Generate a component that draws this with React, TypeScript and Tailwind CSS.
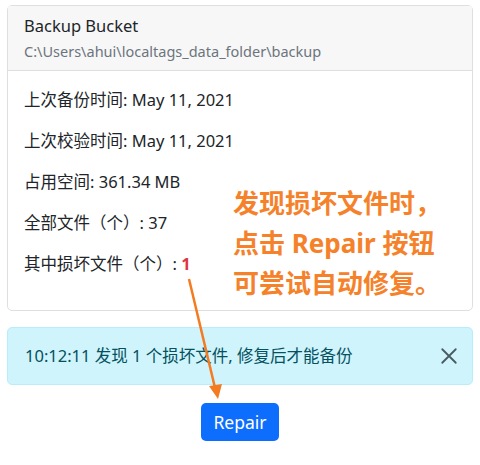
const font = { fontFamily: '"Noto Sans", "Noto Sans CJK SC", sans-serif' };

const rows: { label: string; value: string; danger?: boolean }[] = [
  { label: "上次备份时间: ", value: "May 11, 2021" },
  { label: "上次校验时间: ", value: "May 11, 2021" },
  { label: "占用空间: ", value: "361.34 MB" },
  { label: "全部文件（个）: ", value: "37" },
  { label: "其中损坏文件（个）: ", value: "1", danger: true },
];

export default function App() {
  return (
    <div className="relative h-[465px] w-[480px] bg-white px-[7px] pt-[5px] text-[#212529]" style={font}>
      <div className="rounded-[5px] border border-[#dfdfdf]">
        <div className="border-b border-[#dfdfdf] bg-[#f7f7f7] px-4 py-[7px]">
          <div className="text-[16.5px] leading-[26px]">Backup Bucket</div>
          <div className="text-[14.5px] leading-[24px] text-[#6c757d]">C:\Users\ahui\localtags_data_folder\backup</div>
        </div>
        <div className="px-4 pt-4 pb-[18px]">
          {rows.map((r) => (
            <p key={r.label} className="mb-[15px] text-[16.5px] leading-[26px]">
              {r.label}
              <span className={r.danger ? "font-bold text-[#dc3545]" : ""}>{r.value}</span>
            </p>
          ))}
        </div>
      </div>

      <div className="mt-4 flex items-center justify-between rounded-[5px] border border-[#b6effb] bg-[#cff4fc] py-4 pl-[17px] pr-[14px] text-[#055160]">
        <span className="text-[16.5px] leading-[24px]">10:12:11 发现 1 个损坏文件, 修复后才能备份</span>
        <svg width="18" height="18" viewBox="0 0 16 16" className="text-[#4a5a60]">
          <path d="M2 2L14 14M14 2L2 14" stroke="currentColor" strokeWidth="1.6" strokeLinecap="round" />
        </svg>
      </div>

      <div className="mt-[18px] flex justify-center">
        <button className="h-[38px] rounded-[5px] bg-[#0d6efd] px-3 text-[17.5px] text-white">Repair</button>
      </div>

      <div className="absolute left-[233px] top-[183px] text-[26px] font-bold leading-[40px] text-[#f5822a]">
        <div>发现损坏文件时，</div>
        <div>点击 Repair 按钮</div>
        <div>可尝试自动修复。</div>
      </div>

      <svg className="absolute left-0 top-0" width="480" height="465" pointerEvents="none">
        <line x1="189" y1="279" x2="216" y2="392" stroke="#f47b20" strokeWidth="2.5" />
        <path d="M209 386 L218 399 L222 384 Z" fill="#f47b20" />
      </svg>
    </div>
  );
}
